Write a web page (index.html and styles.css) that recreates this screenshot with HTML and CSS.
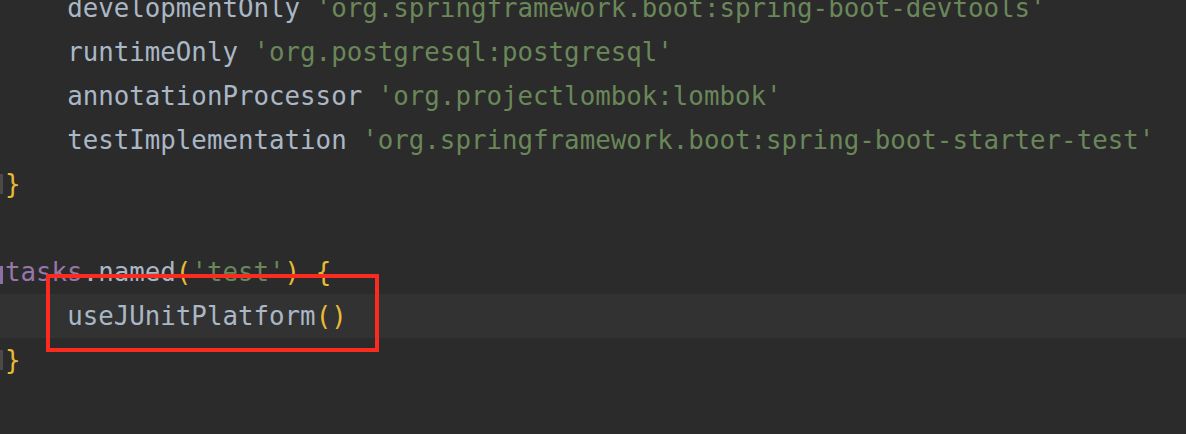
FILE: index.html
```html
<!DOCTYPE html>
<html lang="en">
<head>
    <meta charset="UTF-8">
    <title>build.gradle</title>
    <link rel="stylesheet" href="styles.css">
</head>
<body>
    <div class="editor">
        <div class="line"><span class="gutter"></span><span class="code">    <span class="id">developmentOnly</span> <span class="str">'org.springframework.boot:spring-boot-devtools'</span></span></div>
        <div class="line"><span class="gutter"></span><span class="code">    <span class="id">runtimeOnly</span> <span class="str">'org.postgresql:postgresql'</span></span></div>
        <div class="line"><span class="gutter"></span><span class="code">    <span class="id">annotationProcessor</span> <span class="str">'org.projectlombok:lombok'</span></span></div>
        <div class="line"><span class="gutter"></span><span class="code">    <span class="id">testImplementation</span> <span class="str">'org.springframework.boot:spring-boot-starter-test'</span></span></div>
        <div class="line"><span class="gutter"><span class="mark grey"></span></span><span class="code"><span class="brace">}</span></span></div>
        <div class="line"><span class="gutter"></span><span class="code"> </span></div>
        <div class="line"><span class="gutter"><span class="mark purple"></span></span><span class="code"><span class="obj">tasks</span><span class="id">.named</span><span class="brace">(</span><span class="str">'test'</span><span class="brace">)</span> <span class="brace">{</span></span></div>
        <div class="line current"><span class="gutter"></span><span class="code">    <span class="id">useJUnitPlatform</span><span class="brace">()</span></span></div>
        <div class="line"><span class="gutter"><span class="mark grey"></span></span><span class="code"><span class="brace">}</span></span></div>
        <div class="line"><span class="gutter"></span><span class="code"> </span></div>

        <div class="highlight-box"></div>
    </div>
</body>
</html>
```

FILE: styles.css
```css
html, body {
    margin: 0;
    padding: 0;
    background-color: #2b2b2b;
    overflow: hidden;
}
.editor {
    position: relative;
    margin-top: -14px;
    font-family: 'DejaVu Sans Mono', 'Liberation Mono', monospace;
    font-size: 25.8px;
    color: #a9b7c6;
}
.line {
    display: flex;
    align-items: center;
    height: 44px;
    white-space: pre;
}
.line.current {
    background-color: #323232;
}
.gutter {
    width: 5px;
    flex-shrink: 0;
    display: flex;
    align-items: center;
}
.mark {
    display: block;
    width: 3px;
    height: 20px;
}
.mark.grey {
    background-color: #4a4a4a;
}
.mark.purple {
    background-color: #8c72a0;
    height: 18px;
    margin-top: 6px;
}
.id {
    color: #a9b7c6;
}
.str {
    color: #6a8759;
}
.brace {
    color: #e8ba36;
}
.obj {
    color: #9876aa;
}
.highlight-box {
    position: absolute;
    left: 46px;
    top: 288px;
    width: 325px;
    height: 70px;
    border: 4px solid #fb2c1f;
}
```
